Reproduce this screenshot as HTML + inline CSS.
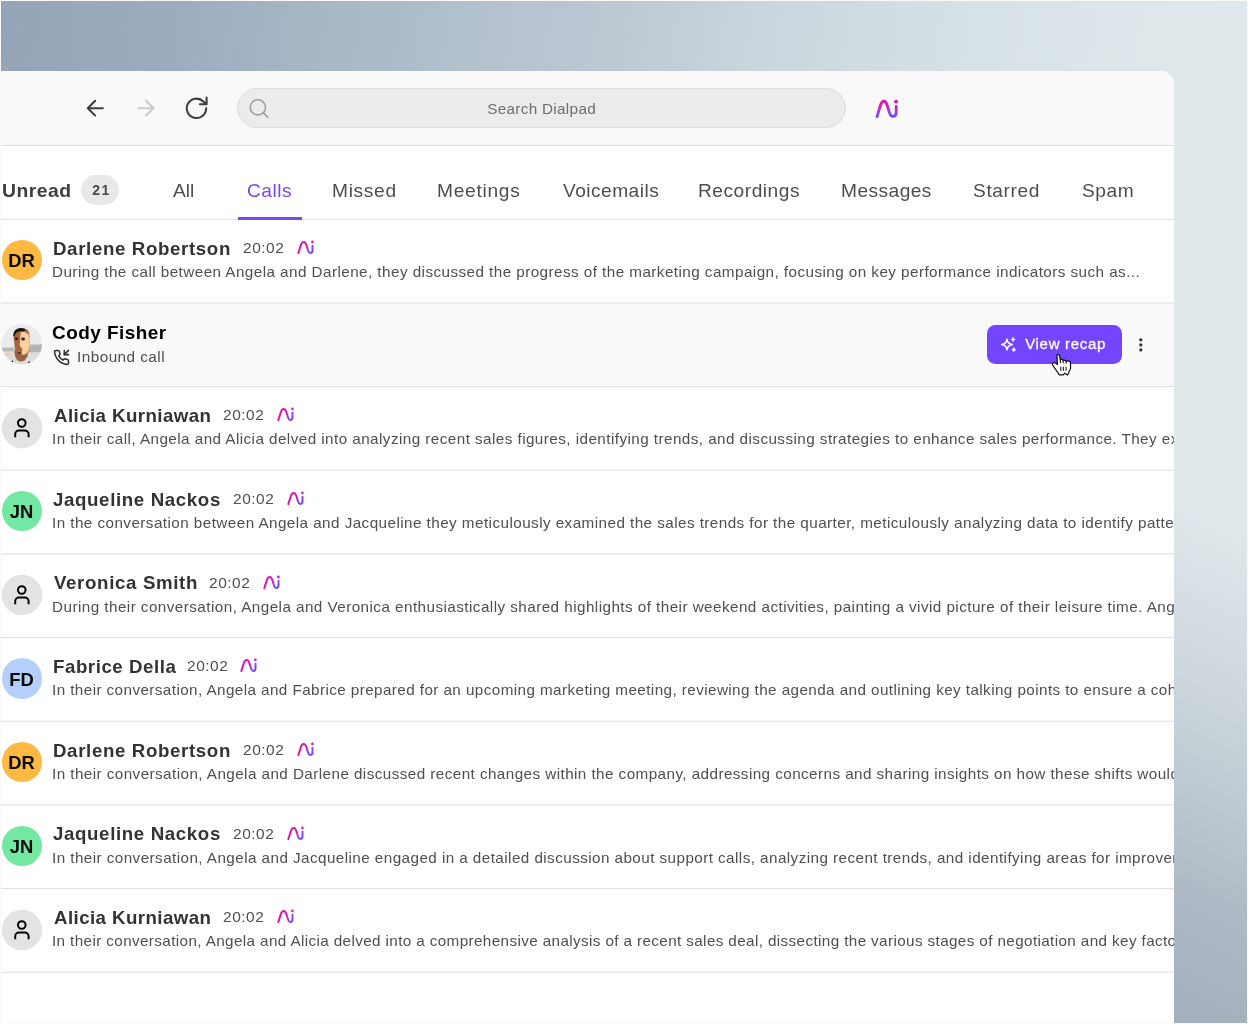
<!DOCTYPE html>
<html><head><meta charset="utf-8"><title>Dialpad</title>
<style>
html,body{margin:0;padding:0;overflow:hidden}
html{width:1248px;height:1024px}
body{width:1248px;height:1024px;position:relative;overflow:hidden;font-family:"Liberation Sans", sans-serif;background:#b9c5cf}
#bg{position:absolute;left:0;top:0;width:1248px;height:1024px;
 background:linear-gradient(100deg,#95a4b7 0%,#9dacbd 12%,#aab8c7 25%,#b5c2ce 35%,#bdcad4 44%,#ccd8df 56%,#d6e1e6 68%,#dde7ea 80%,#e0eaec 90%)}
#bg2{position:absolute;left:0;top:0;width:1248px;height:1024px;
 background:linear-gradient(205deg,rgba(152,163,179,0) 32%,rgba(152,163,179,0.08) 36%,rgba(152,163,179,0.25) 43%,rgba(152,163,179,0.46) 50.3%,rgba(152,163,179,0.68) 57.1%,rgba(152,163,179,0.82) 64.6%,rgba(152,163,179,1) 100%)}
#frame{position:absolute;left:0;top:0;width:1248px;height:1024px;box-sizing:border-box;border:1px solid #faf9f7;border-right-width:1.5px;border-bottom-width:1.5px}
#win{position:absolute;left:0;top:70.5px;width:1174.2px;height:953.5px;background:#fff;border-top-right-radius:13px;overflow:hidden}
#inner{position:absolute;left:0;top:-70.5px;width:1248px;height:1024px}
#inner span{white-space:pre;line-height:24.0px;}
</style></head><body>
<div id="bg"></div><div id="bg2"></div>
<svg width="0" height="0" style="position:absolute"><defs><linearGradient id="gs" x1="0" y1="0" x2="1" y2="1"><stop offset="0" stop-color="#de14ae"/><stop offset="0.5" stop-color="#dc16b0"/><stop offset="0.66" stop-color="#a53fe2"/><stop offset="0.85" stop-color="#7848ff"/><stop offset="1" stop-color="#7446ff"/></linearGradient></defs></svg>
<div id="win"><div id="inner">
<div style="position:absolute;left:0;top:70px;width:1175px;height:75.3px;background:#f9f9f9"></div>
<div style="position:absolute;left:0;top:302.67px;width:1175px;height:83.67px;background:#f9f9f9"></div>
<svg style="position:absolute;left:0;top:0" width="1175" height="1024" viewBox="0 0 1175 1024"><rect x="0" y="218.68" width="1175" height="1.16" fill="#e2e2e2"/><rect x="0" y="302.34" width="1175" height="1.16" fill="#e2e2e2"/><rect x="0" y="386.00" width="1175" height="1.16" fill="#e2e2e2"/><rect x="0" y="469.66" width="1175" height="1.16" fill="#e2e2e2"/><rect x="0" y="553.32" width="1175" height="1.16" fill="#e2e2e2"/><rect x="0" y="636.98" width="1175" height="1.16" fill="#e2e2e2"/><rect x="0" y="720.64" width="1175" height="1.16" fill="#e2e2e2"/><rect x="0" y="804.30" width="1175" height="1.16" fill="#e2e2e2"/><rect x="0" y="887.96" width="1175" height="1.16" fill="#e2e2e2"/><rect x="0" y="971.62" width="1175" height="1.16" fill="#e2e2e2"/><rect x="0" y="144.85" width="1175" height="1.16" fill="#e2e2e2"/></svg>
<svg style="position:absolute;left:80px;top:92px" width="140" height="32" viewBox="80 92 140 32" fill="none" stroke-linecap="round" stroke-linejoin="round">
<g stroke="#3d3d3d" stroke-width="2.05">
<path d="M102.9 108.2 H87.8 M95.2 100.8 L87.8 108.2 L95.2 115.6"/>
<path d="M206.2 108.3 a9.7 9.7 0 1 1 -2.9 -6.9 L206.4 104.2 M206.6 97.6 V104.3 H199.9"/>
</g>
<path d="M138.5 108.2 H153.4 M146 100.8 L153.4 108.2 L146 115.6" stroke="#c9c9c9" stroke-width="2"/>
</svg>
<div style="position:absolute;left:237px;top:88px;width:609px;height:40px;box-sizing:border-box;border-radius:20px;background:#ececec;border:1px solid #dcdcdc"></div>
<svg style="position:absolute;left:246px;top:96px" width="26" height="26" viewBox="246 96 26 26" fill="none" stroke="#9c9c9c" stroke-width="1.55" stroke-linecap="round"><circle cx="257.9" cy="107.4" r="7.6"/><path d="M263.4 112.9 L267.6 117.1"/></svg>
<svg style="position:absolute;left:872px;top:96px" width="30" height="26" viewBox="872 96 30 26"><defs><linearGradient id="gt" gradientUnits="userSpaceOnUse" x1="0" y1="100" x2="0" y2="118"><stop offset="0" stop-color="#dc17ae"/><stop offset="0.38" stop-color="#d61bb4"/><stop offset="0.62" stop-color="#a83fe0"/><stop offset="0.82" stop-color="#7a48ff"/><stop offset="1" stop-color="#7346ff"/></linearGradient></defs>
<path d="M877.1 116.6 L880.2 105.8 C881.3 102.2 882.6 101.2 883.9 101.2 C885.3 101.2 886.3 102.6 887.2 105.4 L889.6 113 C890.5 115.6 891.4 116.3 892.8 116.3 C894.9 116.3 896.2 114.8 896.2 112.4 L896.2 106.3" fill="none" stroke="url(#gt)" stroke-width="2.85" stroke-linecap="round" stroke-linejoin="round"/><circle cx="896" cy="101.6" r="1.95" fill="#dc17ae"/></svg>

<div style="position:absolute;left:81.3px;top:175px;width:38.2px;height:30.4px;border-radius:15.2px;background:#e8e8e8"></div>
<div style="position:absolute;left:237.5px;top:217px;width:64.5px;height:3px;background:#7747fb"></div>

<svg style="position:absolute;left:0px;top:320px" width="46" height="48" viewBox="0 320 46 48"><defs><clipPath id="cc"><circle cx="21.9" cy="344.1" r="20.2"/></clipPath></defs>
<g clip-path="url(#cc)"><rect x="0" y="320" width="46" height="48" fill="#ebebeb"/>
<path d="M0 347.6 L14 347.4 L14 345.2 L30 344.8 L44 344.6 V368 H0Z" fill="#dddddd"/>
<path d="M0 347.7 L14 347.5 V351.2 L0 351.6Z" fill="#b9b9b9"/>
<path d="M29 344.8 L44 344.6 V351.6 Q36 352.6 29 352Z" fill="#b4b4b4"/>
<path d="M5 353.6 h5.5 v2.2 h-5.5z" fill="#f6c58c"/>
<path d="M14.6 350 Q14 357 17.5 360.4 Q21 362.6 24.5 360.4 Q28.6 357 28.2 350Z" fill="#9c6144"/>
<path d="M13.6 338 Q12.6 330.6 21.4 329.6 Q30 330.6 30 340 L30 347 Q29.6 354.6 23.6 356 Q17.4 356.6 15 349.6 Z" fill="#a5673f"/>
<path d="M20.8 332.2 Q28.6 331.4 29.8 338 L29.8 346.8 Q29 352.6 24.8 354.6 L21.6 354.6 L22.4 349 L19.6 345.6 L20.2 339.6 Z" fill="#f9d09c"/>
<path d="M13.2 335.4 Q13.4 328.6 20.4 328 Q25 327.8 26.4 330.2 Q23.8 331.6 20 331.2 Q15.4 331.6 14.4 336.4 Z" fill="#151312"/>
<path d="M24.6 328.6 Q28.6 329.6 30 335 Q28.4 332.2 25.4 331.2Z" fill="#9c5a3a"/>
<rect x="15" y="337.4" width="3" height="2.6" rx="1" fill="#241d1a"/><rect x="21.4" y="337.4" width="3.4" height="3" rx="1" fill="#2e2a2a"/>
<path d="M17.2 352 L20.8 352.4 L19.8 354.6Z" fill="#2a2422"/>
<circle cx="12.4" cy="361.4" r="0.9" fill="#111"/><circle cx="29" cy="362.4" r="0.9" fill="#111"/>
</g></svg>
<svg style="position:absolute;left:52.9px;top:348.9px" width="16.9" height="16.9" viewBox="0 0 24 24" fill="none" stroke="#2e2e2e" stroke-width="2.15" stroke-linecap="round" stroke-linejoin="round"><path d="M16 2v6h6"/><path d="M22 2l-6 6"/><path d="M22 16.92v3a2 2 0 0 1-2.18 2 19.79 19.79 0 0 1-8.63-3.07 19.5 19.5 0 0 1-6-6 19.79 19.79 0 0 1-3.07-8.67A2 2 0 0 1 4.11 2h3a2 2 0 0 1 2 1.72 12.84 12.84 0 0 0 .7 2.81 2 2 0 0 1-.45 2.11L8.09 9.91a16 16 0 0 0 6 6l1.27-1.27a2 2 0 0 1 2.11-.45 12.84 12.84 0 0 0 2.81.7A2 2 0 0 1 22 16.92z"/></svg>
<div style="position:absolute;left:986.9px;top:325.1px;width:135.2px;height:38.6px;border-radius:8.5px;background:#7345fe"></div>
<svg style="position:absolute;left:999px;top:335px" width="20" height="20" viewBox="999 335 20 20" fill="none" stroke="#fff" stroke-width="1.45" stroke-linejoin="round" stroke-linecap="round">
<path d="M1007 339.1 Q1007.6 343.9 1012.4 344.5 Q1007.6 345.1 1007 349.9 Q1006.4 345.1 1001.6 344.5 Q1006.4 343.9 1007 339.1Z"/>
<path d="M1013.1 337.2 Q1013.4 339.1 1015.3 339.4 Q1013.4 339.7 1013.1 341.6 Q1012.8 339.7 1010.9 339.4 Q1012.8 339.1 1013.1 337.2Z" fill="#fff" stroke-width="0.5"/>
<path d="M1013.8 347.5 Q1014.1 349.4 1016 349.7 Q1014.1 350 1013.8 351.9 Q1013.5 350 1011.6 349.7 Q1013.5 349.4 1013.8 347.5Z" fill="#fff" stroke-width="0.5"/>
</svg>
<svg style="position:absolute;left:1136px;top:336px" width="10" height="18" viewBox="1136 336 10 18" fill="#333"><circle cx="1140.8" cy="339.8" r="1.65"/><circle cx="1140.8" cy="344.9" r="1.65"/><circle cx="1140.8" cy="349.9" r="1.65"/></svg>

<div style="position:absolute;left:1.6px;top:240.00px;width:40.4px;height:40.4px;border-radius:50%;background:#fdb942"></div><svg style="position:absolute;left:295.50px;top:239.00px" width="20" height="17" viewBox="295.5 239 20 17"><path d="M297.8 253.1 L300.5 244.6 C301.3 242.3 302.2 241.9 303.3 241.9 C304.5 241.9 305.1 242.8 305.7 244.6 L307.6 250.6 C308.2 252.4 308.8 253.1 309.7 253.1 C311.1 253.1 312.0 252 312.0 250.3 L312.0 245.6" fill="none" stroke="url(#gs)" stroke-width="1.95" stroke-linecap="round" stroke-linejoin="round"/><circle cx="311.9" cy="241.9" r="1.3" fill="#de14ae"/></svg><svg style="position:absolute;left:-0.20px;top:405.63px" width="44" height="44" viewBox="0 0 44 44"><circle cx="22" cy="22" r="20.2" fill="#e3e3e3"/><circle cx="21.77" cy="17.0" r="3.8" fill="none" stroke="#000" stroke-width="1.95"/><path d="M15.2 31.3 V28.3 a3.8 3.8 0 0 1 3.8 -3.8 h5.8 a3.8 3.8 0 0 1 3.8 3.8 V31.3" fill="none" stroke="#000" stroke-width="1.95"/></svg><svg style="position:absolute;left:275.50px;top:406.33px" width="20" height="17" viewBox="295.5 239 20 17"><path d="M297.8 253.1 L300.5 244.6 C301.3 242.3 302.2 241.9 303.3 241.9 C304.5 241.9 305.1 242.8 305.7 244.6 L307.6 250.6 C308.2 252.4 308.8 253.1 309.7 253.1 C311.1 253.1 312.0 252 312.0 250.3 L312.0 245.6" fill="none" stroke="url(#gs)" stroke-width="1.95" stroke-linecap="round" stroke-linejoin="round"/><circle cx="311.9" cy="241.9" r="1.3" fill="#de14ae"/></svg><div style="position:absolute;left:1.6px;top:491.00px;width:40.4px;height:40.4px;border-radius:50%;background:#72e8a3"></div><svg style="position:absolute;left:285.50px;top:490.00px" width="20" height="17" viewBox="295.5 239 20 17"><path d="M297.8 253.1 L300.5 244.6 C301.3 242.3 302.2 241.9 303.3 241.9 C304.5 241.9 305.1 242.8 305.7 244.6 L307.6 250.6 C308.2 252.4 308.8 253.1 309.7 253.1 C311.1 253.1 312.0 252 312.0 250.3 L312.0 245.6" fill="none" stroke="url(#gs)" stroke-width="1.95" stroke-linecap="round" stroke-linejoin="round"/><circle cx="311.9" cy="241.9" r="1.3" fill="#de14ae"/></svg><svg style="position:absolute;left:-0.20px;top:572.97px" width="44" height="44" viewBox="0 0 44 44"><circle cx="22" cy="22" r="20.2" fill="#e3e3e3"/><circle cx="21.77" cy="17.0" r="3.8" fill="none" stroke="#000" stroke-width="1.95"/><path d="M15.2 31.3 V28.3 a3.8 3.8 0 0 1 3.8 -3.8 h5.8 a3.8 3.8 0 0 1 3.8 3.8 V31.3" fill="none" stroke="#000" stroke-width="1.95"/></svg><svg style="position:absolute;left:261.60px;top:573.67px" width="20" height="17" viewBox="295.5 239 20 17"><path d="M297.8 253.1 L300.5 244.6 C301.3 242.3 302.2 241.9 303.3 241.9 C304.5 241.9 305.1 242.8 305.7 244.6 L307.6 250.6 C308.2 252.4 308.8 253.1 309.7 253.1 C311.1 253.1 312.0 252 312.0 250.3 L312.0 245.6" fill="none" stroke="url(#gs)" stroke-width="1.95" stroke-linecap="round" stroke-linejoin="round"/><circle cx="311.9" cy="241.9" r="1.3" fill="#de14ae"/></svg><div style="position:absolute;left:1.6px;top:658.33px;width:40.4px;height:40.4px;border-radius:50%;background:#b5cffb"></div><svg style="position:absolute;left:239.30px;top:657.33px" width="20" height="17" viewBox="295.5 239 20 17"><path d="M297.8 253.1 L300.5 244.6 C301.3 242.3 302.2 241.9 303.3 241.9 C304.5 241.9 305.1 242.8 305.7 244.6 L307.6 250.6 C308.2 252.4 308.8 253.1 309.7 253.1 C311.1 253.1 312.0 252 312.0 250.3 L312.0 245.6" fill="none" stroke="url(#gs)" stroke-width="1.95" stroke-linecap="round" stroke-linejoin="round"/><circle cx="311.9" cy="241.9" r="1.3" fill="#de14ae"/></svg><div style="position:absolute;left:1.6px;top:742.00px;width:40.4px;height:40.4px;border-radius:50%;background:#fdb942"></div><svg style="position:absolute;left:295.50px;top:741.00px" width="20" height="17" viewBox="295.5 239 20 17"><path d="M297.8 253.1 L300.5 244.6 C301.3 242.3 302.2 241.9 303.3 241.9 C304.5 241.9 305.1 242.8 305.7 244.6 L307.6 250.6 C308.2 252.4 308.8 253.1 309.7 253.1 C311.1 253.1 312.0 252 312.0 250.3 L312.0 245.6" fill="none" stroke="url(#gs)" stroke-width="1.95" stroke-linecap="round" stroke-linejoin="round"/><circle cx="311.9" cy="241.9" r="1.3" fill="#de14ae"/></svg><div style="position:absolute;left:1.6px;top:825.67px;width:40.4px;height:40.4px;border-radius:50%;background:#72e8a3"></div><svg style="position:absolute;left:285.50px;top:824.67px" width="20" height="17" viewBox="295.5 239 20 17"><path d="M297.8 253.1 L300.5 244.6 C301.3 242.3 302.2 241.9 303.3 241.9 C304.5 241.9 305.1 242.8 305.7 244.6 L307.6 250.6 C308.2 252.4 308.8 253.1 309.7 253.1 C311.1 253.1 312.0 252 312.0 250.3 L312.0 245.6" fill="none" stroke="url(#gs)" stroke-width="1.95" stroke-linecap="round" stroke-linejoin="round"/><circle cx="311.9" cy="241.9" r="1.3" fill="#de14ae"/></svg><svg style="position:absolute;left:-0.20px;top:907.63px" width="44" height="44" viewBox="0 0 44 44"><circle cx="22" cy="22" r="20.2" fill="#e3e3e3"/><circle cx="21.77" cy="17.0" r="3.8" fill="none" stroke="#000" stroke-width="1.95"/><path d="M15.2 31.3 V28.3 a3.8 3.8 0 0 1 3.8 -3.8 h5.8 a3.8 3.8 0 0 1 3.8 3.8 V31.3" fill="none" stroke="#000" stroke-width="1.95"/></svg><svg style="position:absolute;left:275.50px;top:908.33px" width="20" height="17" viewBox="295.5 239 20 17"><path d="M297.8 253.1 L300.5 244.6 C301.3 242.3 302.2 241.9 303.3 241.9 C304.5 241.9 305.1 242.8 305.7 244.6 L307.6 250.6 C308.2 252.4 308.8 253.1 309.7 253.1 C311.1 253.1 312.0 252 312.0 250.3 L312.0 245.6" fill="none" stroke="url(#gs)" stroke-width="1.95" stroke-linecap="round" stroke-linejoin="round"/><circle cx="311.9" cy="241.9" r="1.3" fill="#de14ae"/></svg>
<div id="txt" style="position:absolute;left:0;top:0;width:1248px;height:1024px;will-change:transform"><span style="position:absolute;left:487.20px;top:96.50px;font-size:15.3px;font-weight:400;color:#6e6e6e;letter-spacing:0.301px;">Search Dialpad</span><span style="position:absolute;left:1.56px;top:178.56px;font-size:18.6px;font-weight:700;color:#3d3d3d;letter-spacing:0.484px;transform:scaleX(1.04);transform-origin:0 50%;">Unread</span><span style="position:absolute;left:92.20px;top:178.15px;font-size:14px;font-weight:700;color:#4a4a4a;letter-spacing:1.542px;">21</span><span style="position:absolute;left:173.25px;top:178.56px;font-size:18.6px;font-weight:400;color:#4d4d4d;letter-spacing:0.016px;transform:scaleX(1.03);transform-origin:0 50%;">All</span><span style="position:absolute;left:246.91px;top:178.56px;font-size:18.6px;font-weight:400;color:#7747fb;letter-spacing:0.500px;transform:scaleX(1.03);transform-origin:0 50%;">Calls</span><span style="position:absolute;left:331.76px;top:178.56px;font-size:18.6px;font-weight:400;color:#4d4d4d;letter-spacing:0.671px;transform:scaleX(1.03);transform-origin:0 50%;">Missed</span><span style="position:absolute;left:437.06px;top:178.56px;font-size:18.6px;font-weight:400;color:#4d4d4d;letter-spacing:0.709px;transform:scaleX(1.03);transform-origin:0 50%;">Meetings</span><span style="position:absolute;left:562.80px;top:178.56px;font-size:18.6px;font-weight:400;color:#4d4d4d;letter-spacing:0.452px;transform:scaleX(1.03);transform-origin:0 50%;">Voicemails</span><span style="position:absolute;left:697.86px;top:178.56px;font-size:18.6px;font-weight:400;color:#4d4d4d;letter-spacing:0.501px;transform:scaleX(1.03);transform-origin:0 50%;">Recordings</span><span style="position:absolute;left:841.26px;top:178.56px;font-size:18.6px;font-weight:400;color:#4d4d4d;letter-spacing:0.435px;transform:scaleX(1.03);transform-origin:0 50%;">Messages</span><span style="position:absolute;left:973.26px;top:178.56px;font-size:18.6px;font-weight:400;color:#4d4d4d;letter-spacing:0.585px;transform:scaleX(1.03);transform-origin:0 50%;">Starred</span><span style="position:absolute;left:1081.56px;top:178.56px;font-size:18.6px;font-weight:400;color:#4d4d4d;letter-spacing:0.580px;transform:scaleX(1.03);transform-origin:0 50%;">Spam</span><span style="position:absolute;left:21.60px;top:249.42px;font-size:18.4px;font-weight:700;color:#0b0b0b;letter-spacing:0.000px;transform:translateX(-50%);">DR</span><span style="position:absolute;left:52.96px;top:236.58px;font-size:17.8px;font-weight:700;color:#333;letter-spacing:0.611px;transform:scaleX(1.05);transform-origin:0 50%;">Darlene Robertson</span><span style="position:absolute;left:242.89px;top:235.89px;font-size:14.6px;font-weight:400;color:#4f4f4f;letter-spacing:0.505px;transform:scaleX(1.06);transform-origin:0 50%;">20:02</span><span style="position:absolute;left:52.45px;top:260.04px;font-size:14.6px;font-weight:400;color:#4f4f4f;letter-spacing:0.420px;transform:scaleX(1.045);transform-origin:0 50%;">During the call between Angela and Darlene, they discussed the progress of the marketing campaign, focusing on key performance indicators such as...</span><span style="position:absolute;left:53.80px;top:403.92px;font-size:17.8px;font-weight:700;color:#333;letter-spacing:0.415px;transform:scaleX(1.05);transform-origin:0 50%;">Alicia Kurniawan</span><span style="position:absolute;left:222.89px;top:403.22px;font-size:14.6px;font-weight:400;color:#4f4f4f;letter-spacing:0.505px;transform:scaleX(1.06);transform-origin:0 50%;">20:02</span><span style="position:absolute;left:52.45px;top:427.37px;font-size:14.6px;font-weight:400;color:#4f4f4f;letter-spacing:0.418px;transform:scaleX(1.045);transform-origin:0 50%;">In their call, Angela and Alicia delved into analyzing recent sales figures, identifying trends, and discussing strategies to enhance sales performance. They expl</span><span style="position:absolute;left:21.60px;top:500.42px;font-size:18.4px;font-weight:700;color:#0b0b0b;letter-spacing:0.000px;transform:translateX(-50%);">JN</span><span style="position:absolute;left:52.96px;top:487.58px;font-size:17.8px;font-weight:700;color:#333;letter-spacing:0.606px;transform:scaleX(1.05);transform-origin:0 50%;">Jaqueline Nackos</span><span style="position:absolute;left:232.89px;top:486.89px;font-size:14.6px;font-weight:400;color:#4f4f4f;letter-spacing:0.505px;transform:scaleX(1.06);transform-origin:0 50%;">20:02</span><span style="position:absolute;left:52.45px;top:511.04px;font-size:14.6px;font-weight:400;color:#4f4f4f;letter-spacing:0.419px;transform:scaleX(1.045);transform-origin:0 50%;">In the conversation between Angela and Jacqueline they meticulously examined the sales trends for the quarter, meticulously analyzing data to identify patterns</span><span style="position:absolute;left:53.80px;top:571.25px;font-size:17.8px;font-weight:700;color:#333;letter-spacing:0.622px;transform:scaleX(1.05);transform-origin:0 50%;">Veronica Smith</span><span style="position:absolute;left:208.99px;top:570.56px;font-size:14.6px;font-weight:400;color:#4f4f4f;letter-spacing:0.505px;transform:scaleX(1.06);transform-origin:0 50%;">20:02</span><span style="position:absolute;left:52.45px;top:594.71px;font-size:14.6px;font-weight:400;color:#4f4f4f;letter-spacing:0.425px;transform:scaleX(1.045);transform-origin:0 50%;">During their conversation, Angela and Veronica enthusiastically shared highlights of their weekend activities, painting a vivid picture of their leisure time. Angela</span><span style="position:absolute;left:21.60px;top:667.76px;font-size:18.4px;font-weight:700;color:#0b0b0b;letter-spacing:0.000px;transform:translateX(-50%);">FD</span><span style="position:absolute;left:52.96px;top:654.92px;font-size:17.8px;font-weight:700;color:#333;letter-spacing:0.520px;transform:scaleX(1.05);transform-origin:0 50%;">Fabrice Della</span><span style="position:absolute;left:186.69px;top:654.22px;font-size:14.6px;font-weight:400;color:#4f4f4f;letter-spacing:0.505px;transform:scaleX(1.06);transform-origin:0 50%;">20:02</span><span style="position:absolute;left:52.45px;top:678.37px;font-size:14.6px;font-weight:400;color:#4f4f4f;letter-spacing:0.395px;transform:scaleX(1.045);transform-origin:0 50%;">In their conversation, Angela and Fabrice prepared for an upcoming marketing meeting, reviewing the agenda and outlining key talking points to ensure a cohesive</span><span style="position:absolute;left:21.60px;top:751.42px;font-size:18.4px;font-weight:700;color:#0b0b0b;letter-spacing:0.000px;transform:translateX(-50%);">DR</span><span style="position:absolute;left:52.96px;top:738.58px;font-size:17.8px;font-weight:700;color:#333;letter-spacing:0.611px;transform:scaleX(1.05);transform-origin:0 50%;">Darlene Robertson</span><span style="position:absolute;left:242.89px;top:737.89px;font-size:14.6px;font-weight:400;color:#4f4f4f;letter-spacing:0.505px;transform:scaleX(1.06);transform-origin:0 50%;">20:02</span><span style="position:absolute;left:52.45px;top:762.04px;font-size:14.6px;font-weight:400;color:#4f4f4f;letter-spacing:0.409px;transform:scaleX(1.045);transform-origin:0 50%;">In their conversation, Angela and Darlene discussed recent changes within the company, addressing concerns and sharing insights on how these shifts would</span><span style="position:absolute;left:21.60px;top:835.09px;font-size:18.4px;font-weight:700;color:#0b0b0b;letter-spacing:0.000px;transform:translateX(-50%);">JN</span><span style="position:absolute;left:52.96px;top:822.25px;font-size:17.8px;font-weight:700;color:#333;letter-spacing:0.606px;transform:scaleX(1.05);transform-origin:0 50%;">Jaqueline Nackos</span><span style="position:absolute;left:232.89px;top:821.56px;font-size:14.6px;font-weight:400;color:#4f4f4f;letter-spacing:0.505px;transform:scaleX(1.06);transform-origin:0 50%;">20:02</span><span style="position:absolute;left:52.45px;top:845.71px;font-size:14.6px;font-weight:400;color:#4f4f4f;letter-spacing:0.411px;transform:scaleX(1.045);transform-origin:0 50%;">In their conversation, Angela and Jacqueline engaged in a detailed discussion about support calls, analyzing recent trends, and identifying areas for improvement</span><span style="position:absolute;left:53.80px;top:905.92px;font-size:17.8px;font-weight:700;color:#333;letter-spacing:0.415px;transform:scaleX(1.05);transform-origin:0 50%;">Alicia Kurniawan</span><span style="position:absolute;left:222.89px;top:905.22px;font-size:14.6px;font-weight:400;color:#4f4f4f;letter-spacing:0.505px;transform:scaleX(1.06);transform-origin:0 50%;">20:02</span><span style="position:absolute;left:52.45px;top:929.37px;font-size:14.6px;font-weight:400;color:#4f4f4f;letter-spacing:0.362px;transform:scaleX(1.045);transform-origin:0 50%;">In their conversation, Angela and Alicia delved into a comprehensive analysis of a recent sales deal, dissecting the various stages of negotiation and key factors</span><span style="position:absolute;left:51.86px;top:320.66px;font-size:18.2px;font-weight:700;color:#000;letter-spacing:0.471px;transform:scaleX(1.04);transform-origin:0 50%;">Cody Fisher</span><span style="position:absolute;left:77.18px;top:345.20px;font-size:14.9px;font-weight:400;color:#4f4f4f;letter-spacing:0.431px;transform:scaleX(1.03);transform-origin:0 50%;">Inbound call</span><span style="position:absolute;left:1025.20px;top:332.20px;font-size:15.0px;font-weight:400;color:#fff;letter-spacing:0.685px;-webkit-text-stroke:0.3px #fff;">View recap</span></div>
<svg style="position:absolute;left:1046px;top:348px" width="32" height="34" viewBox="1046 348 32 34">
<path d="M1057.0 355.0 Q1057.9 353.6 1059.3 355.0 L1060.2 359.4 Q1061.8 358.6 1063.0 360.2 Q1064.8 359.6 1066.0 361.2 Q1068.6 360.4 1070.4 362.0 L1070.6 368.0 Q1070.2 370.0 1069.2 371.4 L1067.6 375.0 L1064.7 373.2 L1063.2 374.8 L1059.4 374.9 L1052.6 365.0 Q1051.8 363.6 1053.2 362.9 Q1054.4 362.2 1055.4 363.0 L1057.4 364.4 Z" fill="#fff" stroke="#111" stroke-width="1.2" stroke-linejoin="round"/>
<path d="M1060.3 359.4 L1060.45 362.6 M1063.1 360.3 L1063.25 362.8 M1066.1 361.3 L1066.25 363.2" stroke="#111" stroke-width="1.1" stroke-linecap="round" fill="none"/>
<path d="M1060.8 366.8 V370.8 M1063.4 366.8 V370.8 M1066.1 366.8 V370.8" stroke="#333" stroke-width="1.2" stroke-linecap="butt"/>
</svg>

</div></div>
<div id="frame"></div>
</body></html>
